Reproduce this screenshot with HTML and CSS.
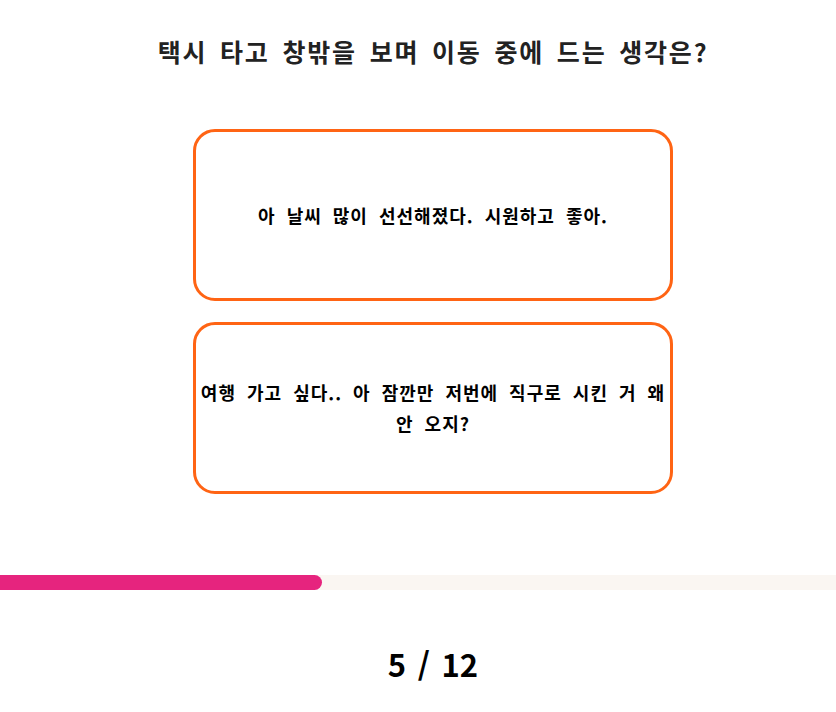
FILE: index.html
```html
<!DOCTYPE html>
<html lang="ko">
<head>
<meta charset="utf-8">
<link rel="stylesheet" href="styles.css">
</head>
<body>
<div class="page">
  <h1 class="title">택시 타고 창밖을 보며 이동 중에 드는 생각은?</h1>
  <div class="choices">
    <button class="choice">아 날씨 많이 선선해졌다. 시원하고 좋아.</button>
    <button class="choice">여행 가고 싶다.. 아 잠깐만 저번에 직구로 시킨 거 왜 안 오지?</button>
  </div>
</div>
<div class="progress"><div class="bar" style="width:38.5%"></div></div>
<div class="count">5 / 12</div>
</body>
</html>
```
FILE: styles.css
```css
html, body { margin: 0; padding: 0; background: #fff; }
body { font-family: "Noto Sans CJK KR", "Noto Sans", sans-serif; color: #111; }
.page { padding-left: 30px; display: flex; flex-direction: column; align-items: center; }
.title { margin: 33px 0 0; font-size: 25px; font-weight: 700; color: #222; line-height: 36px; letter-spacing: 1.8px; word-spacing: 4px; white-space: nowrap; }
.choices { margin-top: 60px; display: flex; flex-direction: column; gap: 21px; }
.choice {
  width: 480px; height: 172px; box-sizing: border-box;
  border: 3px solid #ff6414; border-radius: 22px; background: #fff;
  font-family: inherit; font-size: 18px; font-weight: 700; color: #000;
  letter-spacing: 1px; word-spacing: 5px;
  line-height: 31px; padding: 0; display: flex; align-items: center; justify-content: center; text-align: center;
}
.progress { margin-top: 81px; height: 15px; background: #faf6f2; }
.bar { height: 100%; background: #e6247e; border-radius: 0 8px 8px 0; }
.count { padding-left: 30px; text-align: center; margin-top: 54px; font-size: 31px; font-weight: 700; color: #000; line-height: 40px; word-spacing: 3px; }
```
